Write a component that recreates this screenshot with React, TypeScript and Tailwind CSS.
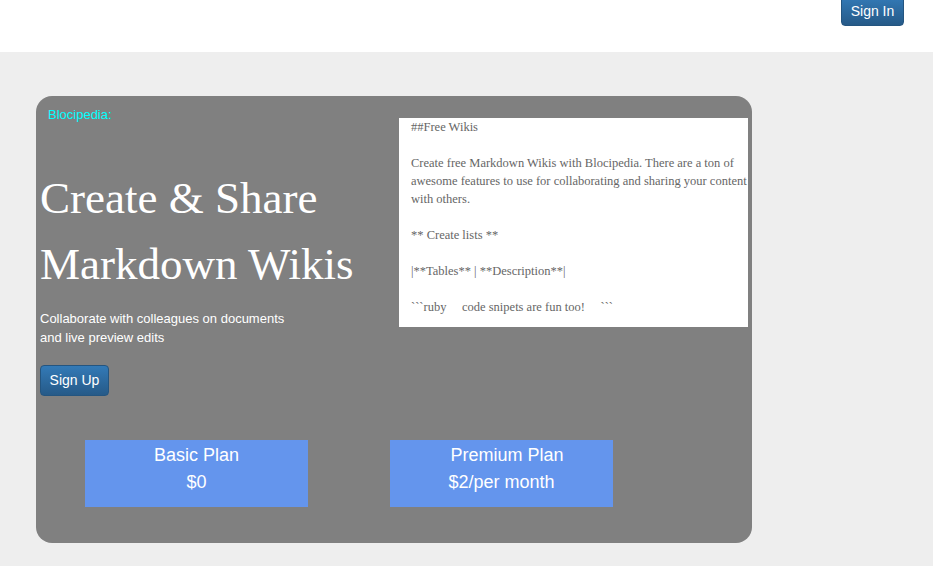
import React from 'react';

const sans = "font-['Liberation_Sans',Arial,sans-serif]";
const serif = "font-['Liberation_Serif','Times_New_Roman',serif]";

const previewLines = [
  '##Free Wikis',
  '',
  'Create free Markdown Wikis with Blocipedia. There are a ton of',
  'awesome features to use for collaborating and sharing your content',
  'with others.',
  '',
  '** Create lists **',
  '',
  '|**Tables** | **Description**|',
  '',
  '```ruby     code snipets are fun too!     ```',
];

function PlanBox({ name, price, nameClass = '' }: { name: string; price: string; nameClass?: string }) {
  return (
    <div className="w-[223px] h-[67px] bg-[#6495ed] text-white text-[18px] leading-[27px] text-center pt-[2px]">
      <div className={nameClass}>{name}</div>
      <div>{price}</div>
    </div>
  );
}

export default function App() {
  return (
    <div className={`min-h-[566px] bg-[#eeeeee] ${sans}`}>
      {/* top nav */}
      <header className="h-[52px] bg-white flex justify-end items-start pr-[29px] overflow-hidden">
        <button className="-mt-[4px] h-[30px] w-[63px] rounded-[4px] border border-[#245580] bg-gradient-to-b from-[#337ab7] to-[#265a88] text-white text-[14px]">
          Sign In
        </button>
      </header>

      <main className="pt-[44px] pl-[36px] pb-[23px]">
        <div className="w-[716px] h-[447px] rounded-[16px] bg-[#808080] flex flex-col">
          <div className="flex">
            {/* hero text */}
            <div className="w-[363px] pl-[4px]">
              <div className="pt-[10px] pl-[8px] text-[13px] leading-[18px] text-[#00ffff]">Blocipedia:</div>
              <h1 className={`${serif} mt-[41px] text-[45px] leading-[66px] text-white font-normal`}>
                Create &amp; Share
                <br />
                Markdown Wikis
              </h1>
              <p className="mt-[12px] text-[13px] leading-[19px] text-white">
                Collaborate with colleagues on documents
                <br />
                and live preview edits
              </p>
              <button className="mt-[18px] h-[31px] w-[69px] rounded-[4px] border border-[#245580] bg-gradient-to-b from-[#337ab7] to-[#265a88] text-white text-[14px]">
                Sign Up
              </button>
            </div>

            {/* markdown preview */}
            <div className={`${serif} mt-[22px] w-[349px] h-[209px] bg-white overflow-hidden pl-[12px] text-[12.5px] leading-[18px] text-[#666666]`}>
              {previewLines.map((line, i) => (
                <div key={i} className="h-[18px] whitespace-pre">
                  {line}
                </div>
              ))}
            </div>
          </div>

          {/* plans */}
          <div className="mt-[44px] pl-[49px] flex gap-[82px]">
            <PlanBox name="Basic Plan" price="$0" />
            <PlanBox name="Premium Plan" price="$2/per month" nameClass="pl-[11px]" />
          </div>
        </div>
      </main>
    </div>
  );
}
